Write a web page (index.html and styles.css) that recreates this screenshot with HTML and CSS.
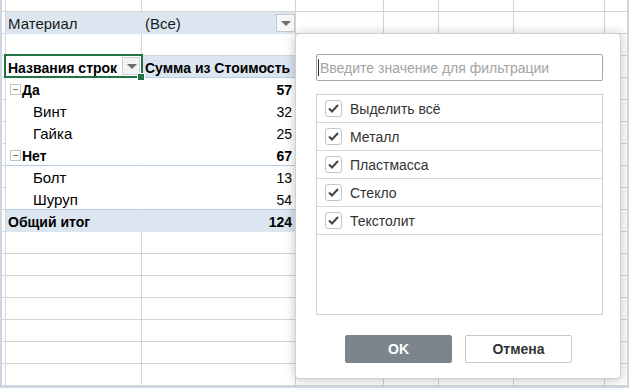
FILE: index.html
```html
<!DOCTYPE html>
<html lang="ru">
<head>
    <meta charset="UTF-8">
    <title>Фильтр сводной таблицы</title>
    <link rel="stylesheet" href="styles.css">
</head>
<body>
<div class="frame">
    <div class="row top">
        <div class="cell c0"></div><div class="cell ca"></div><div class="cell cb"></div><div class="cell cc"></div><div class="cell cd"></div><div class="cell ce"></div><div class="cell cf"></div><div class="cell cg"></div>
    </div>
    <div class="row">
        <div class="cell c0"></div>
        <div class="cell ca page">Материал</div>
        <div class="cell cb page page-value">(Все)<span class="drop"></span></div>
        <div class="cell cc"></div><div class="cell cd"></div><div class="cell ce"></div><div class="cell cf"></div><div class="cell cg"></div>
    </div>
    <div class="row">
        <div class="cell c0"></div><div class="cell ca"></div><div class="cell cb"></div><div class="cell cc"></div><div class="cell cd"></div><div class="cell ce"></div><div class="cell cf"></div><div class="cell cg"></div>
    </div>
    <div class="row">
        <div class="cell c0"></div>
        <div class="cell ca head active">Названия строк<span class="drop small"></span></div>
        <div class="cell cb head blue">Сумма из Стоимость</div>
        <div class="cell cc"></div><div class="cell cd"></div><div class="cell ce"></div><div class="cell cf"></div><div class="cell cg"></div>
    </div>
    <div class="row">
        <div class="cell c0"></div>
        <div class="cell ca pv group"><span class="toggle"></span>Да</div>
        <div class="cell cb pv num group">57</div>
        <div class="cell cc"></div><div class="cell cd"></div><div class="cell ce"></div><div class="cell cf"></div><div class="cell cg"></div>
    </div>
    <div class="row">
        <div class="cell c0"></div>
        <div class="cell ca pv item">Винт</div>
        <div class="cell cb pv num">32</div>
        <div class="cell cc"></div><div class="cell cd"></div><div class="cell ce"></div><div class="cell cf"></div><div class="cell cg"></div>
    </div>
    <div class="row">
        <div class="cell c0"></div>
        <div class="cell ca pv item">Гайка</div>
        <div class="cell cb pv num">25</div>
        <div class="cell cc"></div><div class="cell cd"></div><div class="cell ce"></div><div class="cell cf"></div><div class="cell cg"></div>
    </div>
    <div class="row">
        <div class="cell c0"></div>
        <div class="cell ca pv group line"><span class="toggle"></span>Нет</div>
        <div class="cell cb pv num group line">67</div>
        <div class="cell cc"></div><div class="cell cd"></div><div class="cell ce"></div><div class="cell cf"></div><div class="cell cg"></div>
    </div>
    <div class="row">
        <div class="cell c0"></div>
        <div class="cell ca pv item">Болт</div>
        <div class="cell cb pv num">13</div>
        <div class="cell cc"></div><div class="cell cd"></div><div class="cell ce"></div><div class="cell cf"></div><div class="cell cg"></div>
    </div>
    <div class="row">
        <div class="cell c0"></div>
        <div class="cell ca pv item line">Шуруп</div>
        <div class="cell cb pv num line">54</div>
        <div class="cell cc"></div><div class="cell cd"></div><div class="cell ce"></div><div class="cell cf"></div><div class="cell cg"></div>
    </div>
    <div class="row">
        <div class="cell c0"></div>
        <div class="cell ca total">Общий итог</div>
        <div class="cell cb total num">124</div>
        <div class="cell cc"></div><div class="cell cd"></div><div class="cell ce"></div><div class="cell cf"></div><div class="cell cg"></div>
    </div>
    <div class="row">
        <div class="cell c0"></div><div class="cell ca"></div><div class="cell cb"></div><div class="cell cc"></div><div class="cell cd"></div><div class="cell ce"></div><div class="cell cf"></div><div class="cell cg"></div>
    </div>
    <div class="row">
        <div class="cell c0"></div><div class="cell ca"></div><div class="cell cb"></div><div class="cell cc"></div><div class="cell cd"></div><div class="cell ce"></div><div class="cell cf"></div><div class="cell cg"></div>
    </div>
    <div class="row">
        <div class="cell c0"></div><div class="cell ca"></div><div class="cell cb"></div><div class="cell cc"></div><div class="cell cd"></div><div class="cell ce"></div><div class="cell cf"></div><div class="cell cg"></div>
    </div>
    <div class="row">
        <div class="cell c0"></div><div class="cell ca"></div><div class="cell cb"></div><div class="cell cc"></div><div class="cell cd"></div><div class="cell ce"></div><div class="cell cf"></div><div class="cell cg"></div>
    </div>
    <div class="row">
        <div class="cell c0"></div><div class="cell ca"></div><div class="cell cb"></div><div class="cell cc"></div><div class="cell cd"></div><div class="cell ce"></div><div class="cell cf"></div><div class="cell cg"></div>
    </div>
    <div class="row">
        <div class="cell c0"></div><div class="cell ca"></div><div class="cell cb"></div><div class="cell cc"></div><div class="cell cd"></div><div class="cell ce"></div><div class="cell cf"></div><div class="cell cg"></div>
    </div>
    <div class="row">
        <div class="cell c0"></div><div class="cell ca"></div><div class="cell cb"></div><div class="cell cc"></div><div class="cell cd"></div><div class="cell ce"></div><div class="cell cf"></div><div class="cell cg"></div>
    </div>

    <div class="filter">
        <div class="search">
            <input type="text" placeholder="Введите значение для фильтрации">
        </div>
        <ul class="values">
            <li><span class="check"><svg width="15" height="15" viewBox="0 0 15 15"><polyline points="3,7.5 6,10.5 12,4" /></svg></span>Выделить всё</li>
            <li><span class="check"><svg width="15" height="15" viewBox="0 0 15 15"><polyline points="3,7.5 6,10.5 12,4" /></svg></span>Металл</li>
            <li><span class="check"><svg width="15" height="15" viewBox="0 0 15 15"><polyline points="3,7.5 6,10.5 12,4" /></svg></span>Пластмасса</li>
            <li><span class="check"><svg width="15" height="15" viewBox="0 0 15 15"><polyline points="3,7.5 6,10.5 12,4" /></svg></span>Стекло</li>
            <li><span class="check"><svg width="15" height="15" viewBox="0 0 15 15"><polyline points="3,7.5 6,10.5 12,4" /></svg></span>Текстолит</li>
        </ul>
        <div class="buttons">
            <button class="btn btn-ok">OK</button>
            <button class="btn btn-cancel">Отмена</button>
        </div>
    </div>
</div>
</body>
</html>
```

FILE: styles.css
```css
* {
    box-sizing: border-box;
}

body {
    margin: 0;
    background: #fff;
    font-family: 'Liberation Sans', Arial, sans-serif;
}

.frame {
    position: relative;
    width: 629px;
    height: 388px;
    border: 2px solid #cdd7e3;
    border-top: 0;
    overflow: hidden;
    color: #000;
}

/* sheet grid */
.row {
    display: flex;
    height: 22px;
}

.row.top {
    height: 12px;
}

.cell {
    flex: none;
    border-right: 1px solid #d4d4d4;
    border-bottom: 1px solid #d4d4d4;
    padding: 2px 3px 0;
    font-size: 15px;
    line-height: 20px;
    white-space: nowrap;
    overflow: hidden;
}

.c0 { width: 4px; padding: 0; }
.ca { width: 136px; }
.cb { width: 154px; }
.cc { width: 88px; }
.cd { width: 55px; }
.ce { width: 75px; }
.cf { width: 91px; }
.cg { flex: 1; border-right: 0; }

.ca { padding-left: 2px; }

/* report filter row */
.page {
    background: #dce6f1;
    border-color: #dce6f1;
    color: #1a1a1a;
}

.page-value {
    display: flex;
    justify-content: space-between;
    padding: 2px 0 0 3px;
    border-right-color: #d4d4d4;
}

.drop {
    position: relative;
    width: 19px;
    height: 18px;
    background: #f6f6f6;
    border: 1px solid #c8c8c8;
}

.drop::after {
    content: "";
    position: absolute;
    left: 4px;
    top: 6px;
    border-left: 5px solid transparent;
    border-right: 5px solid transparent;
    border-top: 5px solid #6d6d6d;
}

.drop.small {
    position: absolute;
    right: 1px;
    top: 1px;
    width: 18px;
    height: 18px;
    background: #f3f3f3;
    border-color: #d0d0d0;
}

/* pivot header */
.head {
    font-size: 14px;
    font-weight: bold;
}

.active {
    position: relative;
    overflow: visible;
    border-color: #fff;
}

.active::before {
    content: "";
    position: absolute;
    left: -2px;
    top: -2px;
    right: -2px;
    bottom: -1px;
    border: 2px solid #217346;
}

.active::after {
    content: "";
    position: absolute;
    right: -4px;
    bottom: -4px;
    width: 6px;
    height: 6px;
    background: #217346;
    border: 1px solid #fff;
}

.blue {
    background: #dce6f1;
    border-right-color: #dce6f1;
    border-bottom-color: #b8cce4;
}

/* pivot body */
.pv {
    border-color: #fff;
}

.pv.line {
    border-bottom-color: #b8cce4;
}

.group {
    font-size: 14px;
    font-weight: bold;
}

.ca.group {
    display: flex;
    align-items: center;
    padding: 2px 0 0 4px;
}

.item {
    padding-left: 27px;
}

.num {
    font-size: 14px;
    text-align: right;
    padding-right: 3px;
}

.toggle {
    position: relative;
    width: 11px;
    height: 11px;
    margin-right: 1px;
    border: 1px solid #c4c4c4;
    background: #fff;
}

.toggle::after {
    content: "";
    position: absolute;
    left: 2px;
    top: 4px;
    width: 5px;
    height: 1px;
    background: #777;
}

.total {
    background: #dce6f1;
    border-color: #dce6f1;
    font-size: 14px;
    font-weight: bold;
}

.cb.total {
    border-right-color: #d4d4d4;
}

/* filter popup */
.filter {
    position: absolute;
    left: 293px;
    top: 33px;
    width: 326px;
    height: 346px;
    padding: 20px 19px 0 20px;
    background: #fff;
    border: 1px solid #d0d0d0;
    border-radius: 4px;
    box-shadow: 0 1px 12px rgba(0, 0, 0, 0.24);
    font-family: 'Liberation Sans', Arial, sans-serif;
    font-size: 14px;
    color: #333;
}

.search {
    position: relative;
}

.search::before {
    content: "";
    position: absolute;
    left: 2px;
    top: 5px;
    width: 1px;
    height: 17px;
    background: #333;
}

.search input {
    display: block;
    width: 287px;
    height: 27px;
    padding: 0 3px;
    border: 1px solid #a6a6a6;
    border-radius: 2px;
    font-family: inherit;
    font-size: 14px;
    outline: none;
}

.search input::placeholder {
    color: #a3a3a3;
}

.values {
    list-style: none;
    margin: 13px 0 0;
    padding: 0;
    width: 287px;
    height: 221px;
    border: 1px solid #d0d0d0;
}

.values li {
    display: flex;
    align-items: center;
    height: 28px;
    padding-left: 8px;
    border-bottom: 1px solid #d6d6d6;
}

.check {
    display: flex;
    align-items: center;
    justify-content: center;
    width: 17px;
    height: 17px;
    margin-right: 8px;
    border: 1px solid #c6c6c6;
    border-radius: 3px;
    background: #fff;
}

.check polyline {
    fill: none;
    stroke: #444;
    stroke-width: 2;
}

.buttons {
    display: flex;
    justify-content: center;
    gap: 13px;
    margin-top: 20px;
}

.btn {
    width: 107px;
    height: 28px;
    font-family: inherit;
    font-size: 14px;
    font-weight: bold;
    border-radius: 2px;
}

.btn-ok {
    background: #7d858c;
    border: 1px solid #7d858c;
    color: #fff;
}

.btn-cancel {
    background: #fff;
    border: 1px solid #c8c8c8;
    color: #333;
}
```
